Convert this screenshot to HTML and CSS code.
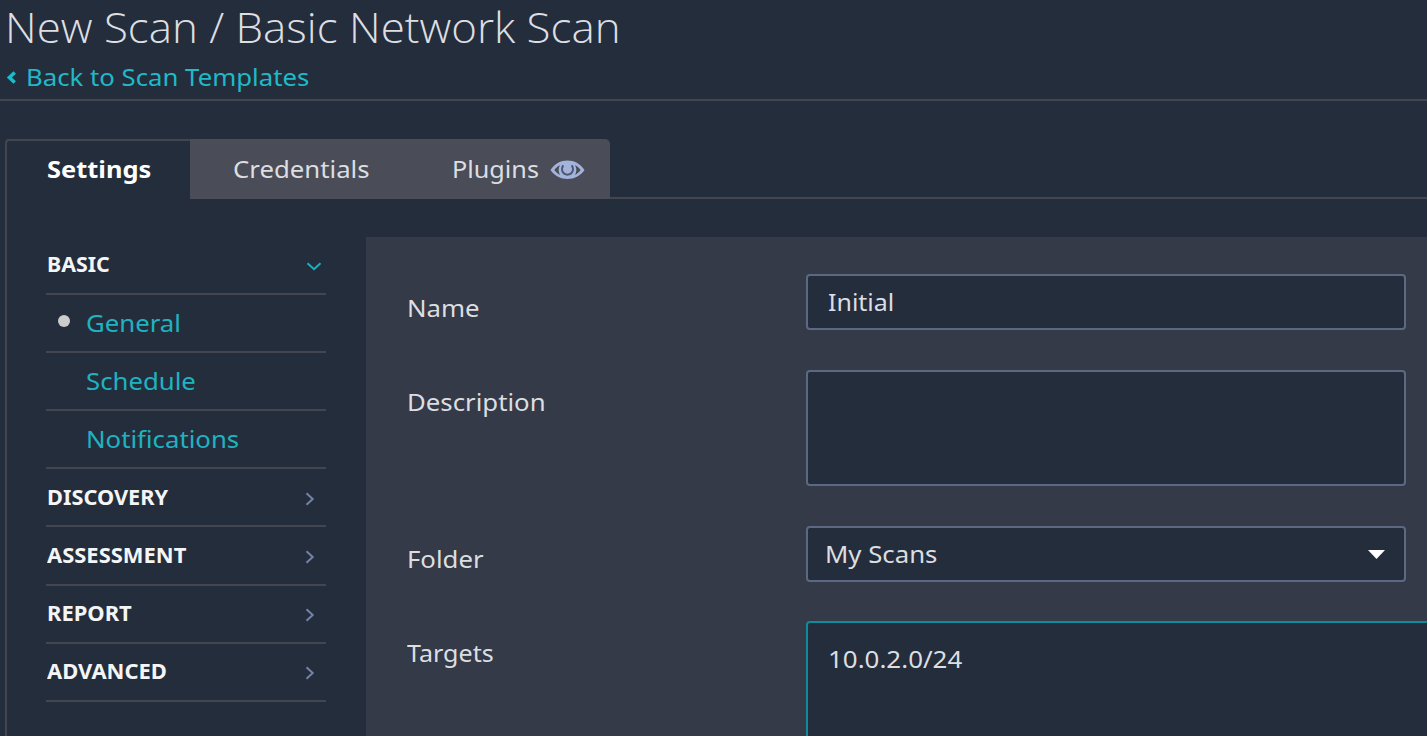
FILE: index.html
```html
<!DOCTYPE html>
<html lang="en">
<head>
<meta charset="utf-8">
<title>New Scan / Basic Network Scan</title>
<link rel="stylesheet" href="styles.css">
</head>
<body>
<header class="page-header">
  <h1 class="title"><span class="w t-title">New Scan / Basic Network Scan</span></h1>
  <a class="back"><svg class="back-icon" width="10" height="13" viewBox="0 0 10 13"><path d="M8.700 1.500L3.400 6.500l5.300 5" fill="none" stroke="currentColor" stroke-width="3.600"/></svg><span class="w back-text">Back to Scan Templates</span></a>
</header>
<main class="content">
  <nav class="tabs">
    <a class="tab tab-active"><span class="w t-settings">Settings</span></a>
    <div class="tab-group">
      <a class="tab tab-cred"><span class="w">Credentials</span></a>
      <a class="tab tab-plugins"><span class="w t-plugins">Plugins</span><svg class="eye" width="35" height="20" viewBox="0 0 36 20"><path fill-rule="evenodd" fill="#a3b3db" d="M.5 10C5 3.500 11 .3 18 .3S31 3.500 35.500 10C31 16.500 25 19.200 18 19.200S5 16.500 .5 10ZM4.500 10c1.500 2.200 3.500 3.900 5.800 4.900C8.400 12 8.400 8 10.300 5.100C8 6.100 6 7.800 4.500 10Zm27 0c-1.500-2.200-3.500-3.900-5.800-4.900c1.900 2.900 1.900 6.900 0 9.800C28 13.900 30 12.200 31.500 10Z"/><path d="M13.600 5.200c-2.800 4.600-.5 9.600 4.400 9.600s7.200-5 4.400-9.600" fill="none" stroke="#4d5870" stroke-width="2"/></svg></a>
    </div>
  </nav>
  <div class="panel">
    <aside class="sidebar">
      <a class="item head first"><span class="w s-basic">BASIC</span><svg class="down" width="16" height="9" viewBox="0 0 16 9"><path d="M1.500 1.300L8 7.200l6.500-5.900" fill="none" stroke="#17b3c1" stroke-width="2"/></svg></a>
      <a class="item sub"><i class="dot"></i><span class="w">General</span></a>
      <a class="item sub"><span class="w">Schedule</span></a>
      <a class="item sub"><span class="w">Notifications</span></a>
      <a class="item head"><span class="w s-disc">DISCOVERY</span><svg class="right" width="10" height="14" viewBox="0 0 10 14"><path d="M1.500 1.200L7.700 7l-6.200 5.800" fill="none" stroke="#7484a8" stroke-width="2"/></svg></a>
      <a class="item head"><span class="w">ASSESSMENT</span><svg class="right" width="10" height="14" viewBox="0 0 10 14"><path d="M1.500 1.200L7.700 7l-6.200 5.800" fill="none" stroke="#7484a8" stroke-width="2"/></svg></a>
      <a class="item head"><span class="w">REPORT</span><svg class="right" width="10" height="14" viewBox="0 0 10 14"><path d="M1.500 1.200L7.700 7l-6.200 5.800" fill="none" stroke="#7484a8" stroke-width="2"/></svg></a>
      <a class="item head"><span class="w">ADVANCED</span><svg class="right" width="10" height="14" viewBox="0 0 10 14"><path d="M1.500 1.200L7.700 7l-6.200 5.800" fill="none" stroke="#7484a8" stroke-width="2"/></svg></a>
    </aside>
    <section class="form">
      <div class="row row-name"><span class="label"><span class="w">Name</span></span><div class="field"><span class="w v-initial">Initial</span></div></div>
      <div class="row row-desc"><span class="label"><span class="w">Description</span></span><div class="field area"></div></div>
      <div class="row row-folder"><span class="label"><span class="w">Folder</span></span><div class="field select"><span class="w v-scans">My Scans</span><svg class="caret" width="17" height="9" viewBox="0 0 17 9"><path d="M0 0h17L8.500 9z" fill="#fff"/></svg></div></div>
      <div class="row row-targets"><span class="label"><span class="w t-targets">Targets</span></span><div class="field targets"><span class="w v-targets">10.0.2.0/24</span></div></div>
    </section>
  </div>
</main>
</body>
</html>
```

FILE: styles.css
```css
* { box-sizing: border-box; }
html, body { height: 100%; margin: 0; overflow: hidden; }
body {
  display: flex;
  flex-direction: column;
  background: #242d3b;
  color: #dcdee1;
  font: 24px/32px "Noto Sans", "Open Sans", sans-serif;
}

/* Slightly extended lettering */
.w { display: inline-block; white-space: nowrap; transform: scaleX(1.073); transform-origin: 0 50%; }
.t-title { transform: scaleX(1.045); }
.t-settings { transform: scaleX(1.06); }
.t-plugins { transform: scaleX(1.05); }
.head .w { transform: scaleX(1.045); }
.head .s-basic { transform: scaleX(1.018); }
.head .s-disc { transform: scaleX(1.036); }
.label .t-targets { transform: scaleX(1.045); }
.v-initial { transform: scaleX(1.04); }
.v-targets { transform: scaleX(1.08); }

.page-header { flex: none; height: 101px; border-bottom: 2px solid #43464f; padding-left: 5px; }
.title { margin: 0; font-size: 42px; line-height: 54px; font-weight: 300; font-family: "Open Sans", sans-serif; white-space: nowrap; }
.back { display: flex; align-items: center; margin-top: 7px; color: #1fb9c8; }
.back-icon { margin: 0 10px 0 1px; }
.content { flex: 1; min-height: 0; display: flex; flex-direction: column; padding: 38px 0 0 5px; }
.tabs { flex: none; display: flex; height: 60px; border-bottom: 2px solid #43464f; }
.tab { display: flex; align-items: center; }
.tab-active { width: 185px; height: 60px; padding: 0 0 2px 39.600px; border: 2px solid #43464f; border-width: 2px 0 0 2px; border-radius: 4px 0 0 0; background: #242d3b; color: #fff; font-weight: 700; }
.tab-group { display: flex; width: 420px; height: 60px; background: #4a4d57; border-radius: 0 5px 0 0; }
.tab-group .tab { height: 60px; padding-bottom: 1px; }
.tab-cred { width: 219px; padding-left: 43px; }
.tab-plugins { padding-left: 42.800px; }
.eye { margin: 3px 0 0 15px; }
.panel { flex: 1; min-height: 0; display: flex; padding: 38px 0 0 39px; border-left: 2px solid #43464f; }
.sidebar { flex: none; width: 280px; }
.item { display: flex; align-items: center; height: 58.100px; border-bottom: 2px solid #43464f; }
.head { font-size: 21px; font-weight: 700; color: #f4f5f6; justify-content: space-between; padding: 0 0 1px .5px; }
.first { padding-bottom: 2px; }
.sub { color: #1fb3c1; padding-left: 40.400px; }
.dot { width: 12px; height: 12px; margin: -4px 16.500px 0 -28.500px; border-radius: 50%; background: #ccc; }
.down { margin: 5px 4px 0 0; }
.right { margin: 4px 11px 0 0; }
.form { flex: 1; min-height: 0; min-width: 0; margin-left: 40px; padding: 37px 0 0 40px; background: #343a47; display: flex; flex-direction: column; overflow: hidden; }
.row { flex: none; display: flex; align-items: flex-start; }
.row-name { height: 96px; }
.row-desc { height: 156px; }
.row-folder { height: 95px; }
.label { flex: none; width: 400px; padding: 18px 0 0 .5px; }
.row-desc .label { padding-top: 16px; }
.row-folder .label { padding-top: 17px; }
.row-targets .label { padding-top: 16px; }
.field { flex: none; width: 600px; height: 56px; display: flex; align-items: center; background: #242d3b; border: 2px solid #5b6a82; border-radius: 4px; padding-left: 20.400px; }
.area { height: 116px; }
.select { justify-content: space-between; padding: 0 19px 0 16.600px; }
.targets { width: 660px; height: 115px; align-items: flex-start; padding-top: 20px; border-color: #0c8d99; border-bottom: 0; border-radius: 4px 0 0 0; }
```
